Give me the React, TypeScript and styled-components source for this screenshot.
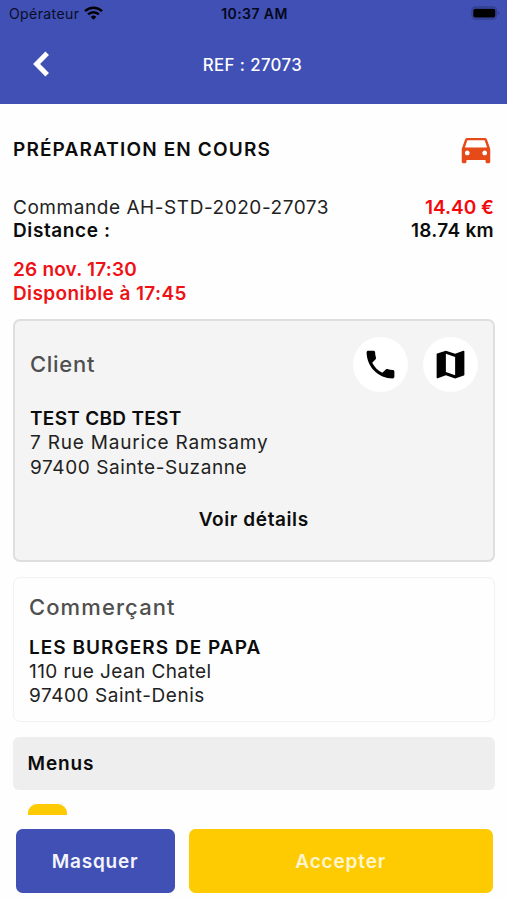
import React from "react";
import styled, { createGlobalStyle } from "styled-components";
import { MdDirectionsCar } from "react-icons/md";

const GlobalStyle = createGlobalStyle`
  *, *::before, *::after { box-sizing: border-box; }
  body { margin: 0; background: #fefefe; font-family: Inter, "Open Sans", sans-serif; color: #0c0c0c; }
  svg { display: block; flex: none; }
`;

const Screen = styled.div`
  width: 100%;
  height: 900px;
  overflow: hidden;
  display: flex;
  flex-direction: column;
`;

const Header = styled.header`
  flex: none;
  height: 103.5px;
  background: #4050b5;
`;

const StatusBar = styled.div`
  display: grid;
  grid-template-columns: 1fr auto 1fr;
  align-items: center;
  height: 28px;
  padding: 0 7px 0 9px;
  color: #0a0d25;
`;

const Carrier = styled.div`
  display: flex;
  align-items: center;
  gap: 5px;
`;

const WifiIcon = styled.svg`
  margin-bottom: 2px;
`;

const Battery = styled.svg`
  justify-self: end;
  margin-bottom: 2px;
`;

const NavBar = styled.div`
  display: grid;
  grid-template-columns: 50px 1fr 50px;
  align-items: center;
  height: 72px;
  padding: 0 18px 0 16px;
  color: #fff;
  text-align: center;
`;

const BackButton = styled.button`
  border: 0;
  padding: 0;
  background: none;
  color: inherit;
`;

type TextProps = { $size?: number; $weight?: number; $spacing?: number; $color?: string; $leading?: number };

const Text = styled.span<TextProps>`
  display: block;
  white-space: nowrap;
  height: 24.2px;
  font-size: ${(p) => p.$size ?? 19}px;
  font-weight: ${(p) => p.$weight ?? 400};
  letter-spacing: ${(p) => p.$spacing ?? 0.6}px;
  color: ${(p) => p.$color ?? "inherit"};
  line-height: ${(p) => p.$leading ?? 26}px;
`;

const Content = styled.main`
  height: 711px;
  flex: none;
  overflow: hidden;
  padding: 26.5px 12.5px 0 13px;
`;

const Stage = styled.div`
  display: flex;
  align-items: center;
  justify-content: space-between;
  height: 38px;
`;

const Summary = styled.section`
  margin-top: 26.7px;
`;

const SummaryRow = styled.div`
  display: flex;
  justify-content: space-between;
  height: 23.8px;
  padding-right: 0.5px;
`;

const Schedule = styled.section`
  margin-top: 14.3px;
`;

const ClientCard = styled.section`
  height: 243px;
  margin-top: 14.3px;
  padding: 15.5px 15px 0 15px;
  border: 2.5px solid #dedede;
  border-radius: 7px;
  background: #f4f4f4;
`;

const CardHeader = styled.div`
  display: flex;
  align-items: center;
  gap: 15px;
  height: 55px;
  margin-bottom: 14.5px;
`;

const CardTitle = styled(Text)`
  flex: 1;
`;

const RoundButton = styled.button`
  display: grid;
  place-items: center;
  width: 55px;
  height: 55px;
  padding: 0;
  border: 0;
  border-radius: 50%;
  background: #fff;
  color: #000;
`;

const DetailsLink = styled.div`
  display: flex;
  justify-content: center;
  margin-top: 28px;
`;

const MerchantCard = styled.section`
  height: 144.5px;
  margin-top: 15px;
  padding: 16.8px 15px 0;
  border: 1.5px solid #f1f1f1;
  border-radius: 7px;
`;

const Address = styled.div`
  margin-top: 15.5px;
`;

const MenusHeading = styled.div`
  display: flex;
  align-items: center;
  height: 53px;
  margin-top: 15px;
  padding-left: 14.5px;
  border-radius: 6px;
  background: #eee;
`;

const MenuQuantity = styled.div`
  width: 39.5px;
  height: 40px;
  margin: 14.5px 0 0 14.5px;
  border-radius: 9px;
  background: #fecb03;
`;

const Actions = styled.footer`
  display: grid;
  grid-template-columns: 159px 1fr;
  gap: 14.5px;
  padding: 14.5px 14.5px 0 15.5px;
`;

const ActionButton = styled.button<{ $accent?: boolean }>`
  display: flex;
  align-items: center;
  justify-content: center;
  height: 63.5px;
  padding: 0;
  border: 0;
  border-radius: 6.5px;
  font-family: inherit;
  color: ${(p) => (p.$accent ? "#fff5cf" : "#f4f5fc")};
  background: ${(p) => (p.$accent ? "#fecb03" : "#4050b5")};
`;

const PhoneIcon = () => (
  <svg width="37" height="37" viewBox="0 0 24 24" fill="currentColor">
    <path d="M6.62 10.79c1.44 2.83 3.76 5.14 6.59 6.59l2.2-2.2c.27-.27.67-.36 1.02-.24 1.12.37 2.33.57 3.57.57.55 0 1 .45 1 1V20c0 .55-.45 1-1 1-9.39 0-17-7.61-17-17 0-.55.45-1 1-1h3.5c.55 0 1 .45 1 1 0 1.25.2 2.45.57 3.57.11.35.03.74-.25 1.02l-2.2 2.2z" />
  </svg>
);

const MapIcon = () => (
  <svg width="37" height="37" viewBox="0 0 24 24" fill="currentColor">
    <path d="M20.5 3l-.16.03L15 5.1 9 3 3.36 4.9c-.21.07-.36.25-.36.48V20.5c0 .28.22.5.5.5l.16-.03L9 18.9l6 2.1 5.64-1.9c.21-.07.36-.25.36-.48V3.5c0-.28-.22-.5-.5-.5zM15 19l-6-2.11V5l6 2.11V19z" />
  </svg>
);

export default function App() {
  return (
    <>
      <GlobalStyle />
      <Screen>
        <Header>
          <StatusBar>
            <Carrier>
              <Text $size={14} $leading={24.2} $spacing={0.4}>Opérateur</Text>
              <WifiIcon width="19" height="14" viewBox="0 0 19 14" fill="none" stroke="#000" strokeWidth="2.5">
                <path d="M1 5.2a12.2 12.2 0 0 1 17 0" />
                <path d="M4.1 8.4a7.7 7.7 0 0 1 10.8 0" />
                <path d="M9.5 13.7 6.7 10.9a4 4 0 0 1 5.6 0z" fill="#000" stroke="none" />
              </WifiIcon>
            </Carrier>
            <Text $size={14} $leading={24.2} $weight={600} $spacing={0.4} $color="#05071a">10:37 AM</Text>
            <Battery width="29" height="14" viewBox="0 0 29 14">
              <rect x="1" y="1" width="24.5" height="12" rx="3.5" fill="none" stroke="#303e8f" strokeWidth="1.3" />
              <rect x="2.3" y="2.7" width="22" height="8.8" rx="1.8" fill="#000" />
              <path d="M26.8 5c2 .7 2 3.3 0 4z" fill="#303e8f" />
            </Battery>
          </StatusBar>
          <NavBar>
            <BackButton aria-label="Retour">
              <svg width="50" height="50" viewBox="0 0 50 50" fill="none" stroke="currentColor" strokeWidth="5">
                <path d="M31.2 14.3 20.6 25l10.6 10.7" />
              </svg>
            </BackButton>
            <Text $size={16.8} $weight={500} $spacing={0.4}>REF : 27073</Text>
          </NavBar>
        </Header>

        <Content>
          <Stage>
            <Text $weight={600} $spacing={1.15}>PRÉPARATION EN COURS</Text>
            <MdDirectionsCar size={38} color="#e64a19" />
          </Stage>

          <Summary>
            <SummaryRow>
              <Text $spacing={0.55} $color="#222">Commande AH-STD-2020-27073</Text>
              <Text $weight={600} $spacing={0} $color="#f5080c">14.40 €</Text>
            </SummaryRow>
            <SummaryRow>
              <Text $weight={600} $spacing={0.6}>Distance :</Text>
              <Text $weight={600} $spacing={0.3}>18.74 km</Text>
            </SummaryRow>
          </Summary>

          <Schedule>
            <Text $weight={600} $spacing={0.2} $color="#ee1115">26 nov. 17:30</Text>
            <Text $weight={600} $spacing={0.4} $color="#ee1115">Disponible à 17:45</Text>
          </Schedule>

          <ClientCard>
            <CardHeader>
              <CardTitle $size={22} $leading={24.2} $weight={500} $spacing={0.7} $color="#4f4f4f">Client</CardTitle>
              <RoundButton aria-label="Appeler"><PhoneIcon /></RoundButton>
              <RoundButton aria-label="Carte"><MapIcon /></RoundButton>
            </CardHeader>
            <Text $weight={600} $spacing={0.3}>TEST CBD TEST</Text>
            <Text $spacing={0.8} $color="#222">7 Rue Maurice Ramsamy</Text>
            <Text $spacing={0.6} $color="#222">97400 Sainte-Suzanne</Text>
            <DetailsLink><Text $weight={600} $spacing={0.6}>Voir détails</Text></DetailsLink>
          </ClientCard>

          <MerchantCard>
            <Text $size={22} $leading={24.2} $weight={500} $spacing={1.1} $color="#4f4f4f">Commerçant</Text>
            <Address>
              <Text $weight={600} $spacing={1.03}>LES BURGERS DE PAPA</Text>
              <Text $spacing={0.42} $color="#222">110 rue Jean Chatel</Text>
              <Text $spacing={0.55} $color="#222">97400 Saint-Denis</Text>
            </Address>
          </MerchantCard>

          <MenusHeading><Text $weight={600} $spacing={0.9}>Menus</Text></MenusHeading>
          <MenuQuantity />
        </Content>

        <Actions>
          <ActionButton><Text $weight={600} $spacing={0.8}>Masquer</Text></ActionButton>
          <ActionButton $accent><Text $weight={600} $spacing={0.85}>Accepter</Text></ActionButton>
        </Actions>
      </Screen>
    </>
  );
}
